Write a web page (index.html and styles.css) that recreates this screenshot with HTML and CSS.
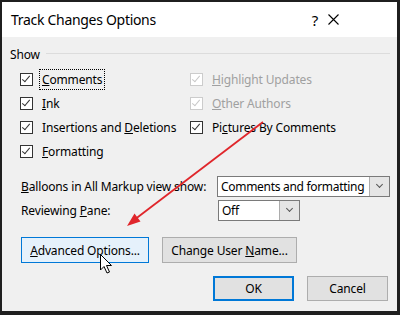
FILE: index.html
```html
<!DOCTYPE html>
<html lang="en">

<head>
    <meta charset="UTF-8">
    <title>Track Changes Options</title>
    <link rel="stylesheet" href="styles.css">
</head>

<body>
    <div class="window">
        <div class="titlebar">
            <span class="title">Track Changes Options</span>
            <span class="help">?</span>
            <svg class="close" width="11" height="11" viewBox="0 0 11 11">
                <path d="M0.5 0.5 L10.5 10.5 M10.5 0.5 L0.5 10.5" stroke="#000" stroke-width="1.1" fill="none" />
            </svg>
        </div>

        <div class="content">
            <div class="group-title">
                <span>Show</span>
                <div class="rule"></div>
            </div>

            <div class="checks">
                <label class="check"><span class="box on"></span><span class="focus"><u>C</u>omments</span></label>
                <label class="check disabled"><span class="box on"></span><span><u>H</u>ighlight Updates</span></label>
                <label class="check"><span class="box on"></span><span><u>I</u>nk</span></label>
                <label class="check disabled"><span class="box on"></span><span><u>O</u>ther Authors</span></label>
                <label class="check"><span class="box on"></span><span>Insertions and <u>D</u>eletions</span></label>
                <label class="check"><span class="box on"></span><span>Pi<u>c</u>tures By Comments</span></label>
                <label class="check"><span class="box on"></span><span><u>F</u>ormatting</span></label>
            </div>

            <div class="fields">
                <span class="field-label"><u>B</u>alloons in All Markup view show:</span>
                <div class="select wide">
                    <span class="value">Comments and formatting</span>
                    <span class="drop"></span>
                </div>
                <span class="field-label">Reviewing <u>P</u>ane:</span>
                <div class="select narrow">
                    <span class="value">Off</span>
                    <span class="drop"></span>
                </div>
            </div>

            <div class="buttons">
                <button class="btn hot advanced"><u>A</u>dvanced Options...</button>
                <button class="btn change">Change User <u>N</u>ame...</button>
            </div>

            <div class="buttons bottom">
                <button class="btn default">OK</button>
                <button class="btn">Cancel</button>
            </div>
        </div>

        <svg class="overlay" width="400" height="315" viewBox="0 0 400 315">
            <line x1="263" y1="122" x2="134" y2="220" stroke="#e0262b" stroke-width="1.8" />
            <polygon points="127,226 140.5,221.5 134.5,213.5" fill="#e0262b" />
            <path d="M100.5 254.5 L100.5 270 L104 266.5 L107 273 L109.5 272 L106.5 265.5 L111.5 265.5 Z" fill="#fff" stroke="#000" stroke-width="1" />
        </svg>
    </div>
</body>

</html>
```

FILE: styles.css
```css
body {
    margin: 0;
    font-family: "Noto Sans", sans-serif;
    font-size: 12px;
    letter-spacing: -0.15px;
    color: #000;
}

.window {
    position: relative;
    width: 395px;
    height: 309px;
    border-style: solid;
    border-color: #1f1f1f;
    border-width: 2px 3px 4px 2px;
    background: #f0f0f0;
    display: flex;
    flex-direction: column;
}

.titlebar {
    height: 35px;
    background: #fff;
    display: flex;
    align-items: center;
    padding-left: 9px;
}

.title {
    font-size: 14px;
    letter-spacing: -0.3px;
    flex: 1;
}

.help {
    font-size: 15px;
    margin-right: 10px;
}

.close {
    margin-right: 58px;
}

.content {
    flex: 1;
    padding-top: 9px;
}

.group-title {
    display: flex;
    align-items: center;
    height: 16px;
    margin-left: 8px;
    margin-right: 7px;
}

.group-title .rule {
    flex: 1;
    height: 1px;
    background: #dcdcdc;
    margin-left: 6px;
    margin-top: -1px;
}

.checks {
    display: grid;
    grid-template-columns: 170px auto;
    grid-auto-rows: 24px;
    margin-top: 5px;
    margin-left: 18px;
}

.check {
    display: flex;
    align-items: center;
}

.box {
    width: 11px;
    height: 11px;
    border: 1px solid #333;
    background: #fff;
    margin-right: 9px;
    position: relative;
}

.box.on::after {
    content: "";
    position: absolute;
    left: 3px;
    top: 0px;
    width: 3px;
    height: 7px;
    border-right: 1px solid #333;
    border-bottom: 1px solid #333;
    transform: rotate(40deg);
}

.check.disabled {
    color: #a0a0a0;
}

.check.disabled .box {
    border-color: #cccccc;
}

.check.disabled .box::after {
    border-color: #c8c8c8;
}

.focus {
    outline: 1px dotted #000;
    outline-offset: 1px;
    padding: 0 1px;
    margin-left: -1px;
}

.fields {
    display: grid;
    grid-template-columns: 196px auto;
    grid-auto-rows: 21px;
    row-gap: 3px;
    margin-top: 13px;
    margin-left: 19px;
    align-items: center;
}

.select {
    height: 19px;
    border: 1px solid #7a7a7a;
    background: #fff;
    display: flex;
    align-items: center;
}

.select .value {
    flex: 1;
    padding-left: 3px;
    white-space: nowrap;
    overflow: hidden;
    letter-spacing: -0.3px;
}

.select .drop {
    width: 19px;
    height: 19px;
    background: #e5e5e5;
    border-left: 1px solid #acacac;
    position: relative;
}

.select .drop::after {
    content: "";
    position: absolute;
    left: 7px;
    top: 5px;
    width: 4px;
    height: 4px;
    border-right: 1px solid #555;
    border-bottom: 1px solid #555;
    transform: rotate(45deg);
}

.wide {
    width: 171px;
}

.narrow {
    width: 80px;
    margin-left: 1px;
}

.buttons {
    display: flex;
    gap: 13px;
    margin-top: 16px;
    margin-left: 19px;
}

.btn {
    font-family: inherit;
    font-size: 12px;
    letter-spacing: -0.15px;
    height: 26px;
    padding: 0;
    border: 1px solid #adadad;
    background: #e1e1e1;
    color: #000;
}

.advanced {
    width: 128px;
}

.change {
    width: 135px;
}

.btn.hot {
    background: #e5f1fb;
    border-color: #0078d7;
}

.buttons.bottom {
    justify-content: flex-end;
    margin-top: 13px;
    margin-right: 9px;
}

.buttons.bottom .btn {
    width: 81px;
    height: 25px;
}

.btn.default {
    border: 2px solid #0078d7;
}

.overlay {
    position: absolute;
    left: -2px;
    top: -2px;
    pointer-events: none;
}
```
